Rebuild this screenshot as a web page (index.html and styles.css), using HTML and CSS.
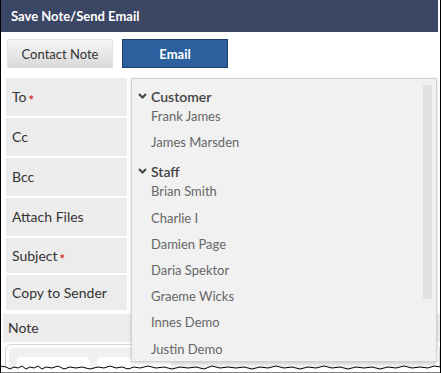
FILE: index.html
```html
<!DOCTYPE html>
<html lang="en">
<head>
    <meta charset="UTF-8">
    <title>Save Note/Send Email</title>
    <link rel="stylesheet" href="styles.css">
</head>
<body>
    <div class="window">
        <div class="header">Save Note/Send Email</div>

        <div class="tabs">
            <button class="tab">Contact Note</button>
            <button class="tab tab-active">Email</button>
        </div>

        <div class="fields">
            <div class="label">To<span class="req">*</span></div>
            <div class="label">Cc</div>
            <div class="label">Bcc</div>
            <div class="label">Attach Files</div>
            <div class="label label-short">Subject<span class="req">*</span></div>
            <div class="label label-short">Copy to Sender</div>
        </div>

        <div class="note-row">Note</div>
        <div class="note-box">
            <div class="note-toolbar">
                <span class="tool"></span>
                <span class="tool"></span>
            </div>
        </div>

        <!-- recipient dropdown -->
        <div class="dropdown">
            <div class="scrollbar"></div>
            <div class="group">
                <svg class="chevron" width="9" height="6" viewBox="0 0 9 6"><polyline points="1,1 4.5,4.5 8,1" fill="none" stroke="#444" stroke-width="2"/></svg>
                Customer
            </div>
            <div class="item">Frank James</div>
            <div class="item">James Marsden</div>
            <div class="group group-next">
                <svg class="chevron" width="9" height="6" viewBox="0 0 9 6"><polyline points="1,1 4.5,4.5 8,1" fill="none" stroke="#444" stroke-width="2"/></svg>
                Staff
            </div>
            <div class="item">Brian Smith</div>
            <div class="item">Charlie I</div>
            <div class="item">Damien Page</div>
            <div class="item">Daria Spektor</div>
            <div class="item">Graeme Wicks</div>
            <div class="item">Innes Demo</div>
            <div class="item">Justin Demo</div>
        </div>

        <svg class="torn" width="441" height="9" viewBox="0 0 441 9">
            <polygon points="0,2 6,3 10,5 14,3 18,4 22,2 26,5 30,3 34,4 38,2 42,5 46,3 52,4 58,2 64,5 70,3 76,4 82,3 90,5 98,3 104,4 110,2 116,4 122,3 128,5 134,3 140,4 148,2 156,4 164,3 172,5 180,3 188,4 196,3 204,5 212,2 220,4 228,3 236,4 244,3 252,5 260,3 268,4 276,2 284,4 292,3 300,5 308,3 316,4 324,2 332,4 340,3 348,5 356,3 364,4 372,3 380,5 388,3 396,4 404,2 412,4 420,3 428,4 434,2 441,3 441,9 0,9" fill="#fff" stroke="#000" stroke-width="1"/>
        </svg>
    </div>
</body>
</html>
```

FILE: styles.css
```css
* {
    margin: 0;
    padding: 0;
    box-sizing: border-box;
}

body {
    background: white;
    font-family: Lato, 'Open Sans', sans-serif;
    color: #333;
}

.window {
    position: relative;
    width: 441px;
    height: 373px;
    overflow: hidden;
    border-left: 1px solid #000;
    border-right: 1px solid #000;
}

.header {
    height: 32px;
    margin-right: 2px;
    padding-left: 10px;
    background: #3b4564;
    color: white;
    font-size: 13px;
    font-weight: bold;
    line-height: 32px;
}

.tabs {
    display: flex;
    gap: 9px;
    padding: 7px 0 0 6px;
}

.tab {
    width: 106px;
    height: 29px;
    font-family: Lato, 'Open Sans', sans-serif;
    font-size: 13px;
    color: #333;
    background: linear-gradient(#f6f6f6, #d9d9d9);
    border: 1px solid #e2e2e2;
}

.tab-active {
    background: #2c5f9e;
    border: 1px solid #1b3d6a;
    color: white;
    font-weight: bold;
}

.fields {
    display: flex;
    flex-direction: column;
    gap: 2px;
    width: 121px;
    margin: 10px 0 0 5px;
}

.label {
    height: 38px;
    padding-left: 6px;
    background: #ececec;
    font-size: 14px;
    line-height: 38px;
}

.label-short {
    height: 35px;
    line-height: 35px;
}

.req {
    color: #d92b2b;
    font-size: 13px;
    font-weight: bold;
    margin-left: 2px;
    vertical-align: -3px;
}

.note-row {
    height: 28px;
    margin: 4px 0 0 2px;
    padding-left: 5px;
    background: #ececec;
    font-size: 14px;
    line-height: 28px;
}

.note-box {
    margin: 2px 0 0 4px;
    height: 40px;
    border: 1px solid #d4d4d4;
    border-radius: 6px;
    padding: 3px;
}

.note-toolbar {
    display: flex;
    gap: 7px;
    height: 30px;
    padding: 9px 0 0 7px;
    background: #f0f0f0;
    border-radius: 4px;
}

.tool {
    width: 74px;
    height: 20px;
    background: white;
    border-radius: 5px;
}

.dropdown {
    position: absolute;
    left: 130px;
    top: 78px;
    width: 306px;
    height: 284px;
    padding-top: 7px;
    background: #f1f1f1;
    border: 1px solid #d2d2d2;
    box-shadow: 0 1px 3px rgba(0, 0, 0, 0.18);
}

.scrollbar {
    position: absolute;
    right: 4px;
    top: 6px;
    width: 9px;
    height: 214px;
    background: #e2e2e2;
}

.group {
    display: flex;
    align-items: center;
    gap: 4px;
    height: 20px;
    padding-left: 6px;
    font-size: 14px;
    font-weight: 600;
    color: #444;
}

.group-next {
    margin-top: 3px;
}

.item {
    height: 26.2px;
    padding-left: 19px;
    font-size: 13px;
    line-height: 20px;
    color: #666;
}

.torn {
    position: absolute;
    left: -1px;
    bottom: 0;
}
```
